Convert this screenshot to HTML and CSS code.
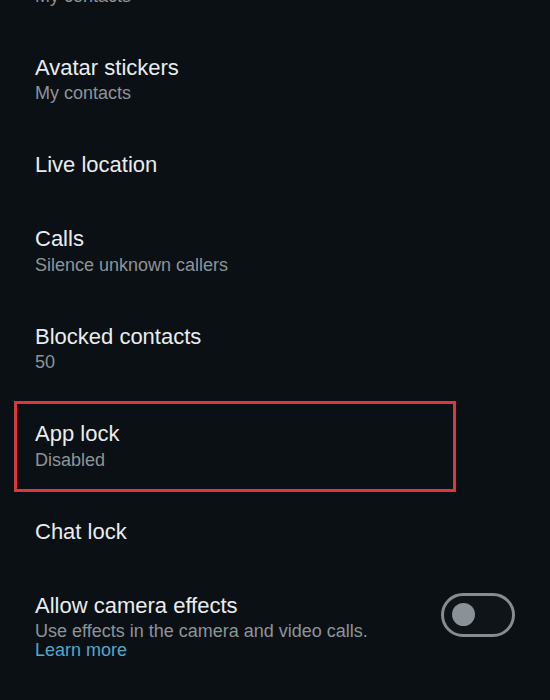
FILE: index.html
```html
<!DOCTYPE html>
<html lang="en">
<head>
    <meta charset="UTF-8">
    <meta name="viewport" content="width=device-width, initial-scale=1.0">
    <title>Privacy</title>
    <link rel="stylesheet" href="styles.css">
</head>
<body>

<div class="settings">
    <div class="row">
        <div class="text">
            <div class="title">Groups</div>
            <div class="sub">My contacts</div>
        </div>
    </div>

    <div class="row">
        <div class="text">
            <div class="title">Avatar stickers</div>
            <div class="sub">My contacts</div>
        </div>
    </div>

    <div class="row">
        <div class="text">
            <div class="title">Live location</div>
        </div>
    </div>

    <div class="row">
        <div class="text">
            <div class="title">Calls</div>
            <div class="sub">Silence unknown callers</div>
        </div>
    </div>

    <div class="row">
        <div class="text">
            <div class="title">Blocked contacts</div>
            <div class="sub">50</div>
        </div>
    </div>

    <div class="row highlight">
        <div class="text">
            <div class="title">App lock</div>
            <div class="sub">Disabled</div>
        </div>
    </div>

    <div class="row">
        <div class="text">
            <div class="title">Chat lock</div>
        </div>
    </div>

    <div class="row">
        <div class="text">
            <div class="title">Allow camera effects</div>
            <div class="sub">Use effects in the camera and video calls.<br><a href="#">Learn more</a></div>
        </div>
        <div class="toggle"><span class="knob"></span></div>
    </div>
</div>

</body>
</html>
```

FILE: styles.css
```css
* {
    box-sizing: border-box;
}

body {
    margin: 0;
    height: 100vh;
    overflow: hidden;
    background: #0b1014;
    font-family: "Liberation Sans", Arial, sans-serif;
    color: #e9edef;
}

.settings {
    display: flex;
    flex-direction: column;
    margin-top: -67px;
}

.row {
    position: relative;
    display: flex;
    justify-content: space-between;
    align-items: flex-start;
    padding: 25px 35px;
}

.title {
    font-size: 22px;
    line-height: 24px;
    color: #e9edef;
}

.sub {
    margin-top: 4.5px;
    font-size: 18px;
    line-height: 19px;
    color: #8d9499;
}

.sub a {
    color: #58a6c8;
    text-decoration: none;
}

/* red box drawn over the App lock row */
.highlight::after {
    content: "";
    position: absolute;
    top: 4px;
    height: 85px;
    left: 14px;
    width: 436px;
    border: 3px solid #d9383e;
}

.toggle {
    flex-shrink: 0;
    display: flex;
    align-items: center;
    width: 74px;
    height: 44px;
    margin-top: -1px;
    padding-left: 8px;
    border: 3px solid #868d92;
    border-radius: 22px;
    background: #0f1418;
}

.knob {
    width: 23px;
    height: 23px;
    border-radius: 50%;
    background: #8a9197;
}
```
